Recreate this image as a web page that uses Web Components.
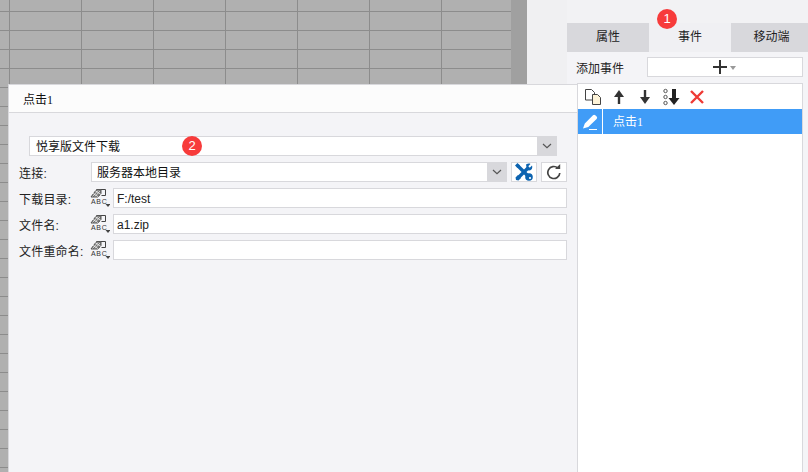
<!DOCTYPE html>
<html>
<head>
<meta charset="utf-8">
<style>
  html, body { margin: 0; padding: 0; background: #f2f2f4; }
  body { font: 12px "Liberation Sans", "Noto Sans CJK SC", sans-serif; color: #222; }
</style>
</head>
<body>
<event-app></event-app>

<script>
const BORDER = '#d8d8dc';

// base class, subclasses just return their template string
class Base extends HTMLElement {
  constructor() {
    super();
    this.attachShadow({mode: 'open'}).innerHTML = this.getTemplate();
  }
}

class NumBadge extends Base {
  getTemplate() {
    return `
      <style>
        :host {
          position: absolute;
          width: 20px;
          height: 20px;
          border-radius: 50%;
          background: #f73b3b;
          color: #fff;
          font: 13px/20px "Liberation Sans", sans-serif;
          text-align: center;
        }
      </style>
      <slot></slot>
    `;
  }
}

class DropSelect extends Base {
  getTemplate() {
    return `
      <style>
        :host {
          display: flex;
          box-sizing: border-box;
          height: 20px;
          background: #fff;
          border: 1px solid ${BORDER};
          border-right: 0;
        }
        .text { flex: 1; padding-left: var(--text-pad, 6px); line-height: 21px; white-space: nowrap; color: #111; }
        .arrow { width: 20px; margin: -1px 0; background: ${BORDER}; display: flex; align-items: center; justify-content: center; }
      </style>
      <div class="text"><slot></slot></div>
      <div class="arrow">
        <svg width="10" height="6" viewBox="0 0 10 6"><path d="M1 1l4 3.600L9 1" fill="none" stroke="#555" stroke-width="1.200"/></svg>
      </div>
    `;
  }
}

class TextField extends Base {
  getTemplate() {
    return `
      <style>
        :host {
          display: block;
          flex: 1;
          box-sizing: border-box;
          height: 20px;
          background: #fff;
          border: 1px solid ${BORDER};
          padding-left: 3px;
          line-height: 21px;
          color: #222;
        }
      </style>
      <slot></slot>
    `;
  }
}

class FormulaIcon extends Base {
  getTemplate() {
    return `
      <style>
        :host { display: block; width: 20px; height: 20px; }
        svg { display: block; }
        text { font: 7px "Liberation Sans", sans-serif; letter-spacing: .7px; fill: #333; }
      </style>
      <svg width="20" height="20" viewBox="0 0 20 20">
        <path d="M10.500 1.500h5v6h-4" fill="none" stroke="#444"/>
        <path d="M6.500 1.500h4.500v4l-3 3.500h-7z" fill="#777" stroke="#555"/>
        <path d="M2.500 8.500l5.500-6M5 8.500l5-5.500M2.500 5l6 4M5 2.500l6 4" stroke="#fff" stroke-width=".7"/>
        <text x="1" y="15.500">ABC</text>
        <path d="M15.500 16h5l-2.500 3z" fill="#444"/>
      </svg>
    `;
  }
}

class FormRow extends Base {
  getTemplate() {
    return `
      <style>
        :host { display: flex; align-items: center; height: 20px; margin-bottom: 6px; }
        .label { width: 71px; flex: none; color: #222; white-space: nowrap; letter-spacing: .2px; }
        .body { flex: 1; display: flex; align-items: center; min-width: 0; }
        ::slotted(formula-icon) { margin-right: 3px; }
      </style>
      <div class="label"><slot name="label"></slot></div>
      <div class="body"><slot></slot></div>
    `;
  }
}

class IconButton extends Base {
  getTemplate() {
    return `
      <style>
        :host {
          display: flex;
          align-items: center;
          justify-content: center;
          box-sizing: border-box;
          width: 26px;
          height: 20px;
          background: #fff;
          border: 1px solid ${BORDER};
        }
      </style>
      <slot></slot>
    `;
  }
}

class EventDialog extends Base {
  getTemplate() {
    return `
      <style>
        :host {
          position: absolute;
          left: 8px;
          top: 84px;
          width: 569px;
          height: 388px;
          box-sizing: border-box;
          border: solid ${BORDER};
          border-width: 1px 0 0 1px;
          background: #f4f4f7;
        }
        .title {
          height: 27px;
          background: #fcfcfc;
          border-bottom: 1px solid ${BORDER};
          padding-left: 14px;
          line-height: 30px;
          font-family: "Liberation Serif", "Noto Sans CJK SC", sans-serif;
          color: #111;
        }
        .body { padding: 23px 10px 0 10px; }
        .top { margin: 0 10px 6px 10px; }
        .conn { display: flex; flex: 1; gap: 4px; margin-left: 1px; }
        .conn drop-select { flex: 1; --text-pad: 5px; }
      </style>
      <div class="title">点击1</div>
      <div class="body">
        <drop-select class="top">悦享版文件下载</drop-select>
        <form-row>
          <span slot="label">连接:</span>
          <div class="conn">
            <drop-select>服务器本地目录</drop-select>
            <icon-button>
              <svg width="18" height="18" viewBox="0 0 18 18">
                <path d="M3.500 14.500L14 4" stroke="#0c63b0" stroke-width="3.400"/>
                <path d="M1 17l-.5-2.500 2.500-2.500 3 3-2.500 2.500z" fill="#0c63b0"/>
                <path d="M11 1.500c2-1.200 3.500-1 4.500-.5L13 3.500l1.500 1.500L17 2.500c.5 1.500.3 3-.6 4-1 1-2.700 1.200-4.400.5z" fill="#0c63b0"/>
                <path d="M2.500 2.500L14 14" stroke="#0c63b0" stroke-width="3.400"/>
                <path d="M0 2.500L2.500 0 5 2.500 2.500 5z" fill="#0c63b0"/>
                <circle cx="14" cy="14" r="3.800" fill="#0c63b0"/>
                <circle cx="15" cy="15" r="1.100" fill="#fff"/>
              </svg>
            </icon-button>
            <icon-button>
              <svg width="16" height="16" viewBox="0 0 16 16">
                <path d="M11.800 4A6 6 0 1 0 13.800 9" fill="none" stroke="#444" stroke-width="1.700"/>
                <path d="M9 5h5.200V0z" fill="#444"/>
              </svg>
            </icon-button>
          </div>
        </form-row>
        <form-row>
          <span slot="label">下载目录:</span>
          <formula-icon></formula-icon>
          <text-field>F:/test</text-field>
        </form-row>
        <form-row>
          <span slot="label">文件名:</span>
          <formula-icon></formula-icon>
          <text-field>a1.zip</text-field>
        </form-row>
        <form-row>
          <span slot="label">文件重命名:</span>
          <formula-icon></formula-icon>
          <text-field></text-field>
        </form-row>
      </div>
    `;
  }
}

class SidePanel extends Base {
  getTemplate() {
    return `
      <style>
        :host {
          display: block;
          width: 241px;
          flex: none;
          background: #f4f4f7;
        }
        .head { height: 23px; background: #f2f2f4; }
        .tabs { display: grid; grid-template-columns: 82px 82px 77px; height: 24px; line-height: 29px; text-align: center; color: #222; }
        .tabs div { background: ${BORDER}; }
        .tabs div.on { background: #f0f0f3; }
        .tabs div:last-child { padding-left: 4px; }
        .add { display: flex; align-items: center; justify-content: space-between; height: 20px; padding: 10px 5px 6px 9px; }
        .add-btn {
          box-sizing: border-box;
          width: 156px;
          height: 20px;
          background: #fff;
          border: 1px solid ${BORDER};
          display: flex;
          align-items: center;
          justify-content: center;
        }
      </style>
      <div class="head"></div>
      <div class="tabs">
        <div>属性</div>
        <div class="on">事件</div>
        <div>移动端</div>
      </div>
      <div class="add">
        <span>添加事件</span>
        <div class="add-btn">
          <svg width="24" height="14" viewBox="0 0 24 14">
            <path d="M7 0v14M0 7h14" stroke="#333" stroke-width="2"/>
            <path d="M17 6h6l-3 4z" fill="#999"/>
          </svg>
        </div>
      </div>
      <event-list></event-list>
    `;
  }
}

class EventList extends Base {
  getTemplate() {
    return `
      <style>
        :host {
          display: block;
          box-sizing: border-box;
          margin: 0 5px 0 10px;
          height: 389px;
          background: #fff;
          border: 1px solid ${BORDER};
          border-bottom: 0;
        }
        .tools { display: flex; align-items: center; height: 25px; padding-left: 7px; }
        .tools svg { display: block; flex: none; }
        .row {
          display: flex;
          height: 25px;
          background: #409cf7;
          color: #fff;
          line-height: 27px;
          font-family: "Liberation Serif", "Noto Sans CJK SC", sans-serif;
        }
        .pen { width: 24px; display: flex; align-items: center; justify-content: center; border-right: 1px solid #fff; }
        .name { padding-left: 10px; }
      </style>
      <div class="tools">
        <svg width="18" height="18" viewBox="0 0 18 18" style="margin-right:8px">
          <path d="M.5 1.500h6l3 3v3h-2v4.500h-7z" fill="#fff" stroke="#444"/>
          <path d="M7.500 6.500h5l3 3v7h-8z" fill="#fdf3d8" stroke="#444"/>
        </svg>
        <svg width="16" height="16" viewBox="0 0 16 16" style="margin-right:10px"><path d="M8 15V6" stroke="#333" stroke-width="2.400"/><path d="M8 1L3 8h10z" fill="#333"/></svg>
        <svg width="16" height="16" viewBox="0 0 16 16" style="margin-right:10px"><path d="M8 1v9" stroke="#333" stroke-width="2.400"/><path d="M8 15L3 8h10z" fill="#333"/></svg>
        <svg width="18" height="18" viewBox="0 0 18 18" style="margin-right:8px">
          <circle cx="2.500" cy="3" r="1.700" fill="none" stroke="#555"/>
          <circle cx="2.500" cy="9" r="1.700" fill="none" stroke="#555"/>
          <circle cx="2.500" cy="15" r="1.700" fill="none" stroke="#555"/>
          <path d="M11 1v10" stroke="#222" stroke-width="4"/>
          <path d="M11 17L5.500 10h11z" fill="#222"/>
        </svg>
        <svg width="16" height="16" viewBox="0 0 16 16"><path d="M2 2l12 12M14 2L2 14" stroke="#ee3a35" stroke-width="2.400"/></svg>
      </div>
      <div class="row">
        <div class="pen">
          <svg width="16" height="16" viewBox="0 0 16 16">
            <path d="M1 14.500l1.800-5L11 1.300c.7-.7 1.600-.7 2.300 0l1.300 1.300c.7.7.7 1.700 0 2.400L6.300 13z" fill="#fff"/>
            <path d="M7 15.500h8" stroke="#fff"/>
          </svg>
        </div>
        <div class="name">点击1</div>
      </div>
    `;
  }
}

class EventApp extends Base {
  getTemplate() {
    return `
      <style>
        :host {
          display: flex;
          position: relative;
          width: 808px;
          height: 472px;
          overflow: hidden;
        }
        .sheet {
          width: 511px;
          flex: none;
          background:
            linear-gradient(to right, #8c8c8c 1px, transparent 1px) 9px 0 / 72px 19px,
            linear-gradient(to bottom, #8c8c8c 1px, transparent 1px) 0 11px / 72px 19px,
            #b0b0b0;
        }
        .scroll { width: 16px; flex: none; background: #a0a0a0; }
        .gap { flex: 1; background: #f0f0f2; }
      </style>
      <div class="sheet"></div>
      <div class="scroll"></div>
      <div class="gap"></div>
      <side-panel></side-panel>
      <event-dialog></event-dialog>
      <num-badge style="left:657px;top:9px">1</num-badge>
      <num-badge style="left:182px;top:136px">2</num-badge>
    `;
  }
}

customElements.define('num-badge', NumBadge);
customElements.define('drop-select', DropSelect);
customElements.define('text-field', TextField);
customElements.define('formula-icon', FormulaIcon);
customElements.define('form-row', FormRow);
customElements.define('icon-button', IconButton);
customElements.define('event-list', EventList);
customElements.define('side-panel', SidePanel);
customElements.define('event-dialog', EventDialog);
customElements.define('event-app', EventApp);
</script>
</body>
</html>
